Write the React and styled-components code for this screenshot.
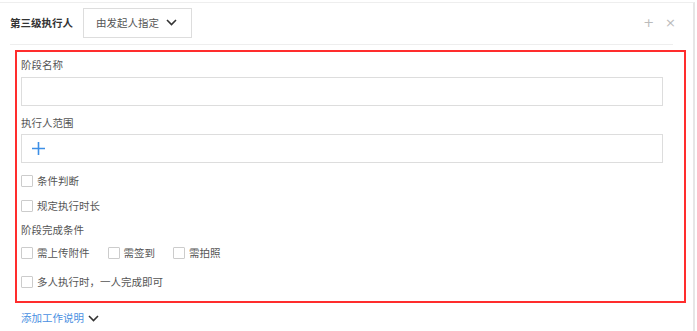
import React from 'react'
import styled, { createGlobalStyle } from 'styled-components'

const GlobalStyle = createGlobalStyle`
  html, body {
    margin: 0;
    padding: 0;
    background: #fff;
  }
  body {
    font-family: "Noto Sans CJK SC", "Noto Sans", sans-serif;
    font-size: 10.5px;
    color: #555;
  }
`

const Page = styled.div`
  width: 697px;
  height: 331px;
  padding-top: 2px;
  box-sizing: border-box;
  overflow: hidden;
`

const Card = styled.div`
  width: 695px;
  height: 329px;
  box-sizing: border-box;
  border-top: 1px solid #eee;
  border-right: 2px solid #e6e6e6;
`

const Header = styled.div`
  display: flex;
  align-items: center;
  margin: 0 20px 0 10px;
  height: 42px;
  border-bottom: 1px solid #eee;
  box-sizing: border-box;
  padding-bottom: 2px;
`

const Title = styled.span`
  font-weight: bold;
  color: #333;
  margin-right: 10px;
`

const Select = styled.div`
  display: flex;
  align-items: center;
  justify-content: space-between;
  width: 109px;
  height: 30px;
  box-sizing: border-box;
  border: 1px solid #ddd;
  padding: 0 14px 0 12px;
  color: #555;
`

const Actions = styled.div`
  margin-left: auto;
  display: flex;
  gap: 11px;
  color: #bbb;
  font-size: 13px;
  font-family: "DejaVu Sans", sans-serif;
  margin-right: -3px;
`

const Panel = styled.div`
  margin: 5px 7px 0 15px;
  border: 2px solid #ff2d2d;
  padding: 6px 21px 12px 4px;
  box-sizing: border-box;
`

const Label = styled.div`
  line-height: 14px;
  margin-top: ${p => p.$top || 0}px;
`

const Input = styled.div`
  height: 29px;
  box-sizing: border-box;
  border: 1px solid #ddd;
  margin-top: ${p => p.$top || 0}px;
  display: flex;
  align-items: center;
  padding-left: 10px;
`

const Row = styled.div`
  display: flex;
  align-items: center;
  gap: 18px;
  height: 14px;
  margin-top: ${p => p.$top || 0}px;
`

const Check = styled.label`
  display: flex;
  align-items: center;
  line-height: 14px;
  gap: 4px;
`

const Box = styled.span`
  width: 12px;
  height: 12px;
  box-sizing: border-box;
  border: 1px solid #ccc;
  border-radius: 1px;
  background: #fff;
`

const Link = styled.div`
  display: flex;
  align-items: center;
  gap: 4px;
  color: #4a90e2;
  margin: 8px 0 0 21px;
  line-height: 14px;
`

const Chevron = ({ color = '#333' }) => (
  <svg width="11" height="7" viewBox="0 0 11 7">
    <path d="M1 1 L5.5 5.5 L10 1" fill="none" stroke={color} strokeWidth="1.6" />
  </svg>
)

const Plus = () => (
  <svg width="13" height="13" viewBox="0 0 13 13">
    <path d="M6.5 0 V13 M0 6.5 H13" stroke="#3d8fe6" strokeWidth="1.6" />
  </svg>
)

const CheckItem = ({ children }) => (
  <Check>
    <Box />
    <span>{children}</span>
  </Check>
)

export default function App() {
  return (
    <Page>
      <GlobalStyle />
      <Card>
        <Header>
          <Title>第三级执行人</Title>
          <Select>
            <span>由发起人指定</span>
            <Chevron />
          </Select>
          <Actions>
            <span>+</span>
            <span>×</span>
          </Actions>
        </Header>
        <Panel>
          <Label>阶段名称</Label>
          <Input $top={5} />
          <Label $top={10}>执行人范围</Label>
          <Input $top={4}>
            <Plus />
          </Input>
          <Row $top={11}>
            <CheckItem>条件判断</CheckItem>
          </Row>
          <Row $top={11}>
            <CheckItem>规定执行时长</CheckItem>
          </Row>
          <Label $top={10}>阶段完成条件</Label>
          <Row $top={9}>
            <CheckItem>需上传附件</CheckItem>
            <CheckItem>需签到</CheckItem>
            <CheckItem>需拍照</CheckItem>
          </Row>
          <Row $top={15}>
            <CheckItem>多人执行时，一人完成即可</CheckItem>
          </Row>
        </Panel>
        <Link>
          添加工作说明
          <Chevron />
        </Link>
      </Card>
    </Page>
  )
}
